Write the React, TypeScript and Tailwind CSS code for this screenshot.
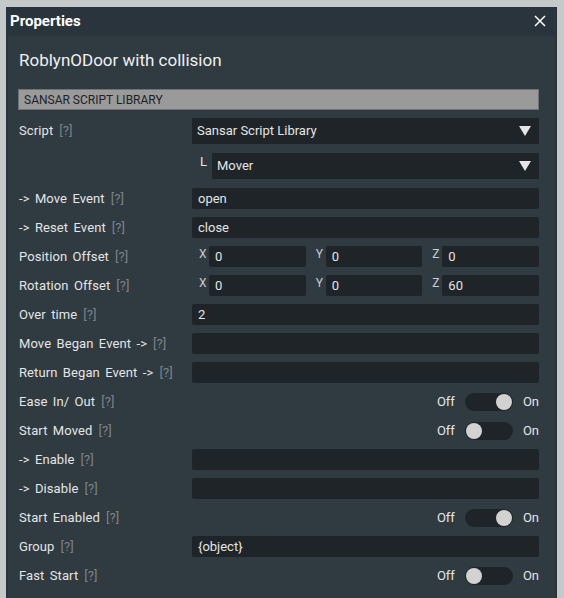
import React from 'react';

const font = { fontFamily: '"Roboto", "Liberation Sans", sans-serif' };

const Help = () => <span className="text-[#7d8388] ml-[6px]">[?]</span>;

const Label = ({ text }: { text: string }) => (
  <div className="w-[173px] shrink-0 text-[13px] text-[#e3e5e6] tracking-[0.1px] [word-spacing:2px] whitespace-nowrap">
    {text}
    <Help />
  </div>
);

const Field = ({ value = '' }: { value?: string }) => (
  <div className="flex-1 h-[21px] bg-[#1e2428] rounded-[2px] px-[6px] pt-[2px] text-[13px] text-[#e3e5e6] leading-[18px]">
    {value}
  </div>
);

const Caret = () => (
  <svg width="12" height="10" viewBox="0 0 12 10" className="shrink-0">
    <path d="M0 0h12L6 10z" fill="#e3e5e6" />
  </svg>
);

const Toggle = ({ on }: { on: boolean }) => (
  <div className="flex items-center text-[13px] text-[#e3e5e6] ml-auto">
    <span className="mr-[10px]">Off</span>
    <div className={`w-[48px] h-[18px] rounded-full bg-[#1e2428] flex items-center px-[1px] ${on ? 'justify-end' : 'justify-start'}`}>
      <div className="w-[16px] h-[16px] rounded-full bg-[#d2d2d2]" />
    </div>
    <span className="ml-[10px]">On</span>
  </div>
);

const Row = ({ label, children }: { label: string; children?: React.ReactNode }) => (
  <div className="flex items-center h-[21px]">
    <Label text={label} />
    {children}
  </div>
);

const Vec = ({ vals }: { vals: string[] }) => (
  <div className="flex-1 flex items-center pl-[7px]">
    {['X', 'Y', 'Z'].map((a, i) => (
      <div key={a} className={`flex-1 flex items-center ${i > 0 ? 'ml-[10px]' : ''}`}>
        <span className="w-[10px] shrink-0 text-[12px] text-[#c9cccf] self-start -mt-[1px]">{a}</span>
        <Field value={vals[i]} />
      </div>
    ))}
  </div>
);

export default function App() {
  return (
    <div style={font} className="w-[564px] h-[598px] bg-[#c6c9ca] pt-[7px] pl-[6px] overflow-hidden">
      <div className="w-[551px] h-full bg-[#2a343c] flex flex-col">
        <div className="h-[28px] flex items-center justify-between pl-[4px] pr-[11px] shrink-0">
          <span className="text-[15px] font-bold text-white">Properties</span>
          <svg width="12" height="12" viewBox="0 0 12 12">
            <path d="M1 1l10 10M11 1L1 11" stroke="#ffffff" strokeWidth="1.5" />
          </svg>
        </div>
        <div className="flex-1 mx-[2px] mt-[1px] bg-[#303a41] pl-[10px] pr-[16px] pt-[12px]">
          <div className="text-[17px] leading-[24px] text-[#eef0f1] pl-[1px]">RoblynODoor with collision</div>
          <div className="mt-[17px] h-[21px] bg-[#9a9a9a] border border-[#6e7378] flex items-center px-[5px] text-[12px] text-[#1d2226]">
            SANSAR SCRIPT LIBRARY
          </div>

          <div className="flex flex-col gap-[8px] mt-[8px] pl-[1px]">
            <div className="flex items-center h-[26px]">
              <Label text="Script" />
              <div className="flex-1 h-[26px] bg-[#1e2428] flex items-center justify-between pl-[5px] pr-[8px] text-[13px] text-[#e3e5e6]">
                Sansar Script Library
                <Caret />
              </div>
            </div>
            <div className="flex items-start h-[26px] mt-[1px]">
              <div className="w-[173px] shrink-0" />
              <span className="w-[20px] pl-[8px] text-[13px] text-[#e3e5e6] -mt-[1px]">L</span>
              <div className="flex-1 h-[26px] bg-[#1e2428] flex items-center justify-between pl-[5px] pr-[8px] text-[13px] text-[#e3e5e6]">
                Mover
                <Caret />
              </div>
            </div>
            <div className="mt-[1px]">
              <Row label="-> Move Event">
                <Field value="open" />
              </Row>
            </div>
            <Row label="-> Reset Event">
              <Field value="close" />
            </Row>
            <Row label="Position Offset">
              <Vec vals={['0', '0', '0']} />
            </Row>
            <Row label="Rotation Offset">
              <Vec vals={['0', '0', '60']} />
            </Row>
            <Row label="Over time">
              <Field value="2" />
            </Row>
            <Row label="Move Began Event ->">
              <Field />
            </Row>
            <Row label="Return Began Event ->">
              <Field />
            </Row>
            <Row label="Ease In/ Out">
              <Toggle on />
            </Row>
            <Row label="Start Moved">
              <Toggle on={false} />
            </Row>
            <Row label="-> Enable">
              <Field />
            </Row>
            <Row label="-> Disable">
              <Field />
            </Row>
            <Row label="Start Enabled">
              <Toggle on />
            </Row>
            <Row label="Group">
              <Field value="{object}" />
            </Row>
            <Row label="Fast Start">
              <Toggle on={false} />
            </Row>
          </div>
        </div>
      </div>
    </div>
  );
}
